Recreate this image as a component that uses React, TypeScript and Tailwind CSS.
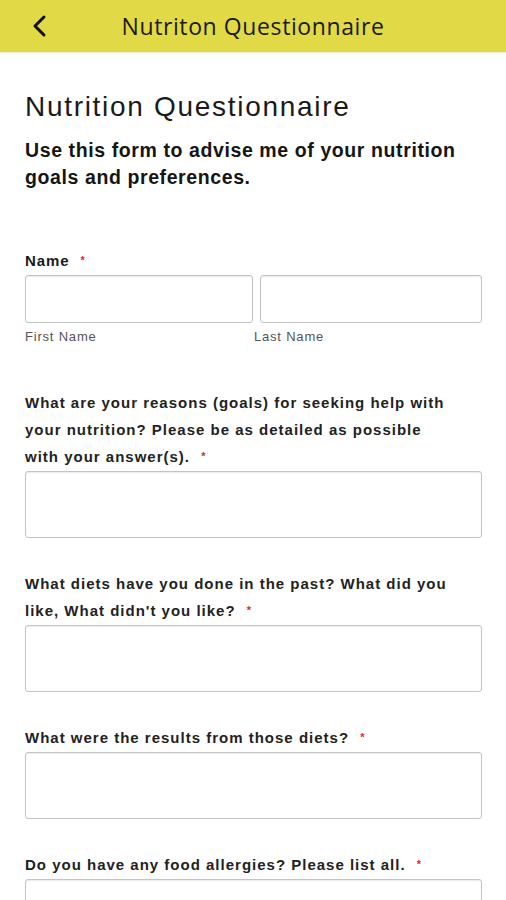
import React from 'react'

const questions = [
  'What are your reasons (goals) for seeking help with your nutrition? Please be as detailed as possible with your answer(s).',
  "What diets have you done in the past? What did you like, What didn't you like?",
  'What were the results from those diets?',
  'Do you have any food allergies? Please list all.',
]

function Req() {
  return <span className="text-[#e4262a] text-[11px] align-top ml-[6px]">*</span>
}

export default function App() {
  return (
    <div className="min-h-[900px] bg-white font-['Liberation_Sans',Arial,sans-serif]">
      <header className="h-[53px] bg-[#e2d946] border-b border-[#eeeecc] flex items-center relative">
        <button className="absolute left-[28px] top-[14px] w-[22px] h-[24px] flex items-center justify-center">
          <svg width="18" height="24" viewBox="0 0 18 24" fill="none">
            <path d="M14 3 L5 12 L14 21" stroke="#111" strokeWidth="3" strokeLinecap="round" strokeLinejoin="round" />
          </svg>
        </button>
        <h1 className="w-full text-center text-[23px] text-[#1c1a08] font-['Open_Sans',sans-serif] tracking-[0.6px]">
          Nutriton Questionnaire
        </h1>
      </header>

      <main className="pl-[25px] pr-[24px] pt-[37px] pb-10">
        <h2 className="text-[28px] leading-[34px] text-[#1a1a1a] tracking-[1.7px]">Nutrition Questionnaire</h2>
        <p className="mt-[13px] text-[19.5px] leading-[27px] font-bold text-[#151515] tracking-[0.6px]">
          Use this form to advise me of your nutrition goals and preferences.
        </p>

        <div className="mt-[56px]">
          <label className="block text-[15px] leading-[27px] font-bold text-[#1a1a1a] tracking-[0.9px]">
            Name <Req />
          </label>
          <div className="mt-px flex gap-[7px]">
            <div className="w-[228px]">
              <input className="w-full h-[48px] border border-[#c4c4c4] rounded-[3px] shadow-[inset_0_1px_1px_rgba(0,0,0,0.08)]" />
              <div className="mt-[4px] text-[13px] leading-[20px] text-[#555] tracking-[0.8px]">First Name</div>
            </div>
            <div className="flex-1">
              <input className="w-full h-[48px] border border-[#c4c4c4] rounded-[3px] shadow-[inset_0_1px_1px_rgba(0,0,0,0.08)]" />
              <div className="mt-[4px] -ml-[6px] text-[13px] leading-[20px] text-[#555] tracking-[0.8px]">Last Name</div>
            </div>
          </div>
        </div>

        <div className="mt-[42px] flex flex-col gap-[32px]">
          {questions.map(q => (
            <div key={q}>
              <label className="block pr-[27px] text-[15px] leading-[27px] font-bold text-[#222] tracking-[1px]">
                {q} <Req />
              </label>
              <textarea className="block w-full h-[67px] mt-px resize-none border border-[#c4c4c4] rounded-[3px] shadow-[inset_0_1px_1px_rgba(0,0,0,0.08)]" />
            </div>
          ))}
        </div>
      </main>
    </div>
  )
}
